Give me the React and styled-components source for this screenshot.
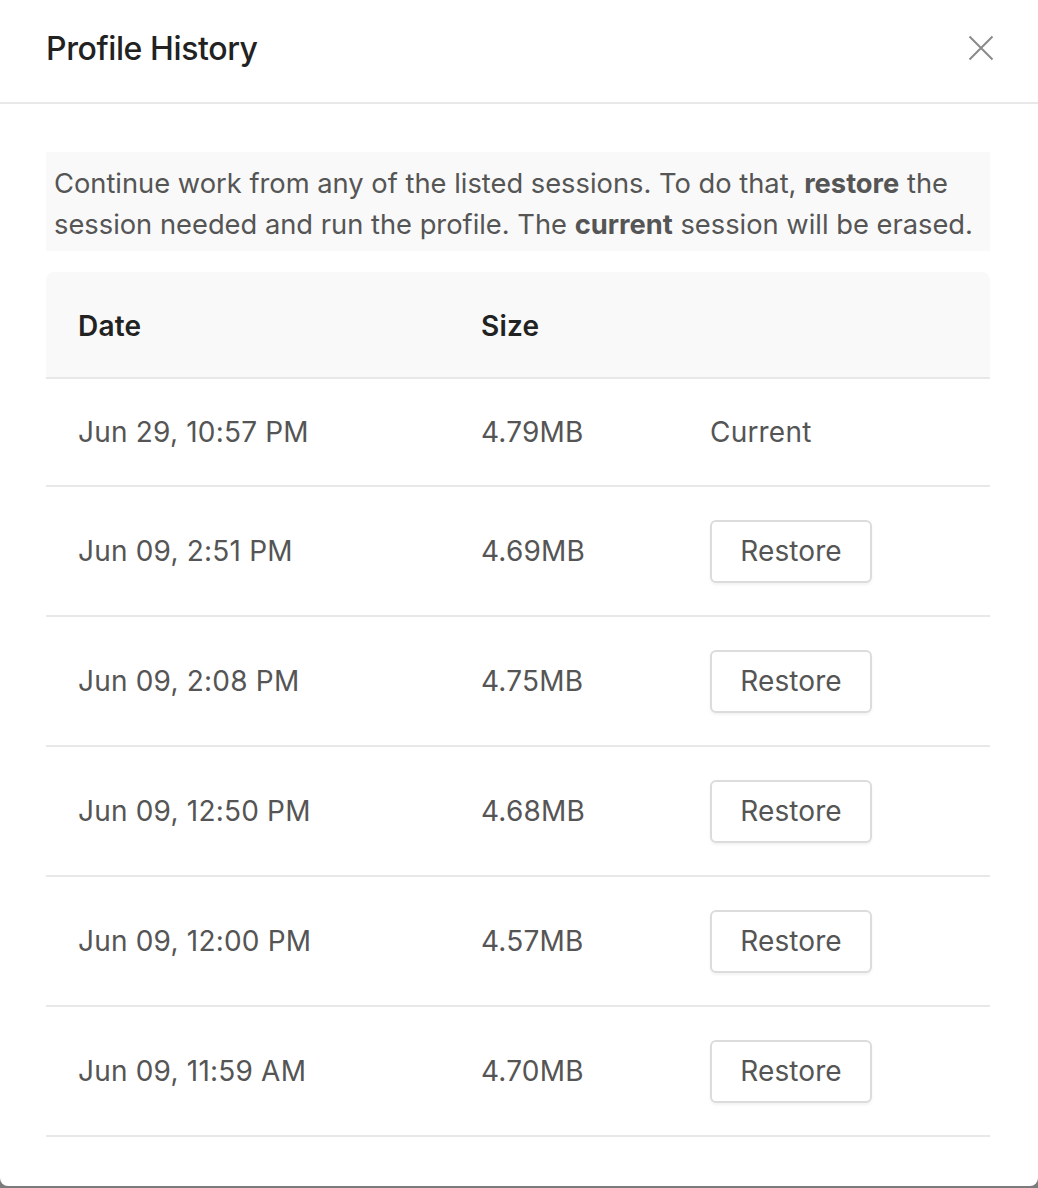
import React from 'react';
import styled, { createGlobalStyle } from 'styled-components';

const GlobalStyle = createGlobalStyle`
  html, body {
    margin: 0;
    padding: 0;
    background: #7b7b7b;
  }
  body {
    font-family: Inter, "Noto Sans", "Liberation Sans", sans-serif;
    -webkit-font-smoothing: antialiased;
  }
`;

const Modal = styled.div`
  background: #fff;
  height: 1186px;
  border-radius: 0 0 8px 8px;
  display: flex;
  flex-direction: column;
  overflow: hidden;
`;

const Header = styled.div`
  height: 104px;
  border-bottom: 2px solid #e8e8e8;
  display: flex;
  align-items: center;
  justify-content: space-between;
  padding: 0 44px 6px 46px;
  box-sizing: border-box;
  flex-shrink: 0;
`;

const Title = styled.h1`
  margin: 0;
  font-size: 32px;
  font-weight: 500;
  color: #222;
  letter-spacing: -0.4px;
`;

const CloseButton = styled.button`
  border: none;
  background: none;
  padding: 0;
  width: 26px;
  height: 26px;
  cursor: pointer;
  display: flex;
`;

const Body = styled.div`
  padding: 48px 48px 0 46px;
  display: flex;
  flex-direction: column;
  gap: 21px;
`;

const Notice = styled.p`
  margin: 0;
  background: #f9f9f9;
  padding: 11px 6px 6px 8px;
  font-size: 27.3px;
  line-height: 41px;
  color: #555;

  b {
    font-weight: 700;
  }
`;

const Table = styled.div`
  display: flex;
  flex-direction: column;
`;

const Row = styled.div`
  display: grid;
  grid-template-columns: 403px 229px 1fr;
  align-items: center;
  height: ${props => props.height}px;
  border-bottom: 2px solid #e8e8e8;
  background: ${props => (props.head ? '#f9f9f9' : 'transparent')};
  border-radius: ${props => (props.head ? '8px 8px 0 0' : '0')};
  box-sizing: border-box;
`;

const Cell = styled.div`
  padding-left: 32px;
  font-size: 28px;
  letter-spacing: 0.2px;
  color: ${props => (props.head ? '#222' : '#555')};
  font-weight: ${props => (props.head ? 600 : 400)};
  padding-top: ${props => (props.head ? 2 : 0)}px;
`;

const RestoreButton = styled.button`
  font-family: inherit;
  font-size: 28px;
  letter-spacing: 0.1px;
  color: #555;
  background: #fff;
  border: 2px solid #dcdcdc;
  border-radius: 6px;
  width: 162px;
  height: 63px;
  box-shadow: 0 2px 3px rgba(0, 0, 0, 0.05);
  cursor: pointer;
`;

const sessions = [
  { date: 'Jun 29, 10:57 PM', size: '4.79MB', current: true },
  { date: 'Jun 09, 2:51 PM', size: '4.69MB' },
  { date: 'Jun 09, 2:08 PM', size: '4.75MB' },
  { date: 'Jun 09, 12:50 PM', size: '4.68MB' },
  { date: 'Jun 09, 12:00 PM', size: '4.57MB' },
  { date: 'Jun 09, 11:59 AM', size: '4.70MB' },
];

const App = () => {
  return (
    <>
      <GlobalStyle />
      <Modal>
        <Header>
          <Title>Profile History</Title>
          <CloseButton aria-label="Close">
            <svg width="26" height="26" viewBox="0 0 26 26">
              <path d="M1.5 1.5 L24.5 24.5 M24.5 1.5 L1.5 24.5" stroke="#8a8a8a" strokeWidth="2" fill="none" />
            </svg>
          </CloseButton>
        </Header>
        <Body>
          <Notice>
            Continue work from any of the listed sessions. To do that, <b>restore</b> the
            session needed and run the profile. The <b>current</b> session will be erased.
          </Notice>
          <Table>
            <Row head height={107}>
              <Cell head>Date</Cell>
              <Cell head>Size</Cell>
              <Cell head />
            </Row>
            {sessions.map(s => (
              <Row key={s.date} height={s.current ? 108 : 130}>
                <Cell>{s.date}</Cell>
                <Cell>{s.size}</Cell>
                <Cell>{s.current ? 'Current' : <RestoreButton>Restore</RestoreButton>}</Cell>
              </Row>
            ))}
          </Table>
        </Body>
      </Modal>
    </>
  );
};

export default App;
